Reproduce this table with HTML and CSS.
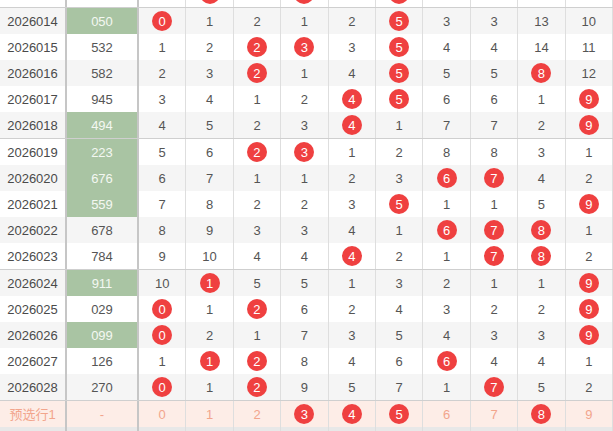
FILE: index.html
```html
<!DOCTYPE html>
<html>
<head>
<meta charset="utf-8">
<link rel="stylesheet" href="styles.css">
</head>
<body>
<div class="sheet">
  <div class="row">
    <div class="c qi"></div><div class="c num"></div>
    <div class="c"></div><div class="c"><span class="ball"></span></div><div class="c"></div><div class="c"><span class="ball"></span></div><div class="c"></div><div class="c"><span class="ball"></span></div><div class="c"></div><div class="c"></div><div class="c"></div><div class="c"></div>
  </div>
  <div class="row alt grp">
    <div class="c qi">2026014</div><div class="c num hit">050</div>
    <div class="c"><span class="ball">0</span></div><div class="c">1</div><div class="c">2</div><div class="c">1</div><div class="c">2</div><div class="c"><span class="ball">5</span></div><div class="c">3</div><div class="c">3</div><div class="c">13</div><div class="c">10</div>
  </div>
  <div class="row">
    <div class="c qi">2026015</div><div class="c num">532</div>
    <div class="c">1</div><div class="c">2</div><div class="c"><span class="ball">2</span></div><div class="c"><span class="ball">3</span></div><div class="c">3</div><div class="c"><span class="ball">5</span></div><div class="c">4</div><div class="c">4</div><div class="c">14</div><div class="c">11</div>
  </div>
  <div class="row alt">
    <div class="c qi">2026016</div><div class="c num">582</div>
    <div class="c">2</div><div class="c">3</div><div class="c"><span class="ball">2</span></div><div class="c">1</div><div class="c">4</div><div class="c"><span class="ball">5</span></div><div class="c">5</div><div class="c">5</div><div class="c"><span class="ball">8</span></div><div class="c">12</div>
  </div>
  <div class="row">
    <div class="c qi">2026017</div><div class="c num">945</div>
    <div class="c">3</div><div class="c">4</div><div class="c">1</div><div class="c">2</div><div class="c"><span class="ball">4</span></div><div class="c"><span class="ball">5</span></div><div class="c">6</div><div class="c">6</div><div class="c">1</div><div class="c"><span class="ball">9</span></div>
  </div>
  <div class="row alt">
    <div class="c qi">2026018</div><div class="c num hit">494</div>
    <div class="c">4</div><div class="c">5</div><div class="c">2</div><div class="c">3</div><div class="c"><span class="ball">4</span></div><div class="c">1</div><div class="c">7</div><div class="c">7</div><div class="c">2</div><div class="c"><span class="ball">9</span></div>
  </div>
  <div class="row grp">
    <div class="c qi">2026019</div><div class="c num hit">223</div>
    <div class="c">5</div><div class="c">6</div><div class="c"><span class="ball">2</span></div><div class="c"><span class="ball">3</span></div><div class="c">1</div><div class="c">2</div><div class="c">8</div><div class="c">8</div><div class="c">3</div><div class="c">1</div>
  </div>
  <div class="row alt">
    <div class="c qi">2026020</div><div class="c num hit">676</div>
    <div class="c">6</div><div class="c">7</div><div class="c">1</div><div class="c">1</div><div class="c">2</div><div class="c">3</div><div class="c"><span class="ball">6</span></div><div class="c"><span class="ball">7</span></div><div class="c">4</div><div class="c">2</div>
  </div>
  <div class="row">
    <div class="c qi">2026021</div><div class="c num hit">559</div>
    <div class="c">7</div><div class="c">8</div><div class="c">2</div><div class="c">2</div><div class="c">3</div><div class="c"><span class="ball">5</span></div><div class="c">1</div><div class="c">1</div><div class="c">5</div><div class="c"><span class="ball">9</span></div>
  </div>
  <div class="row alt">
    <div class="c qi">2026022</div><div class="c num">678</div>
    <div class="c">8</div><div class="c">9</div><div class="c">3</div><div class="c">3</div><div class="c">4</div><div class="c">1</div><div class="c"><span class="ball">6</span></div><div class="c"><span class="ball">7</span></div><div class="c"><span class="ball">8</span></div><div class="c">1</div>
  </div>
  <div class="row">
    <div class="c qi">2026023</div><div class="c num">784</div>
    <div class="c">9</div><div class="c">10</div><div class="c">4</div><div class="c">4</div><div class="c"><span class="ball">4</span></div><div class="c">2</div><div class="c">1</div><div class="c"><span class="ball">7</span></div><div class="c"><span class="ball">8</span></div><div class="c">2</div>
  </div>
  <div class="row alt grp">
    <div class="c qi">2026024</div><div class="c num hit">911</div>
    <div class="c">10</div><div class="c"><span class="ball">1</span></div><div class="c">5</div><div class="c">5</div><div class="c">1</div><div class="c">3</div><div class="c">2</div><div class="c">1</div><div class="c">1</div><div class="c"><span class="ball">9</span></div>
  </div>
  <div class="row">
    <div class="c qi">2026025</div><div class="c num">029</div>
    <div class="c"><span class="ball">0</span></div><div class="c">1</div><div class="c"><span class="ball">2</span></div><div class="c">6</div><div class="c">2</div><div class="c">4</div><div class="c">3</div><div class="c">2</div><div class="c">2</div><div class="c"><span class="ball">9</span></div>
  </div>
  <div class="row alt">
    <div class="c qi">2026026</div><div class="c num hit">099</div>
    <div class="c"><span class="ball">0</span></div><div class="c">2</div><div class="c">1</div><div class="c">7</div><div class="c">3</div><div class="c">5</div><div class="c">4</div><div class="c">3</div><div class="c">3</div><div class="c"><span class="ball">9</span></div>
  </div>
  <div class="row">
    <div class="c qi">2026027</div><div class="c num">126</div>
    <div class="c">1</div><div class="c"><span class="ball">1</span></div><div class="c"><span class="ball">2</span></div><div class="c">8</div><div class="c">4</div><div class="c">6</div><div class="c"><span class="ball">6</span></div><div class="c">4</div><div class="c">4</div><div class="c">1</div>
  </div>
  <div class="row alt">
    <div class="c qi">2026028</div><div class="c num">270</div>
    <div class="c"><span class="ball">0</span></div><div class="c">1</div><div class="c"><span class="ball">2</span></div><div class="c">9</div><div class="c">5</div><div class="c">7</div><div class="c">1</div><div class="c"><span class="ball">7</span></div><div class="c">5</div><div class="c">2</div>
  </div>
  <div class="row pre grp">
    <div class="c qi">预选行1</div><div class="c num">-</div>
    <div class="c">0</div><div class="c">1</div><div class="c">2</div><div class="c"><span class="ball">3</span></div><div class="c"><span class="ball">4</span></div><div class="c"><span class="ball">5</span></div><div class="c">6</div><div class="c">7</div><div class="c"><span class="ball">8</span></div><div class="c">9</div>
  </div>
  <div class="row foot">
    <div class="c qi"></div><div class="c num"></div>
    <div class="c"></div><div class="c"></div><div class="c"></div><div class="c"></div><div class="c"></div><div class="c"></div><div class="c"></div><div class="c"></div><div class="c"></div><div class="c"></div>
  </div>
</div>
</body>
</html>
```
FILE: styles.css
```css
html, body {
  margin: 0;
  padding: 0;
  background: #ffffff;
  overflow: hidden;
}
body {
  font-family: "Liberation Sans", Arial, "Noto Sans CJK SC", sans-serif;
  font-size: 13px;
  color: #555555;
}
.sheet {
  width: 613px;
  margin-top: -19px;
}
.row {
  display: grid;
  grid-template-columns: 67px 72px repeat(10, 1fr);
  height: 26px;
  background: #ffffff;
}
.row.alt {
  background: #f5f5f5;
}
.row.grp {
  border-top: 1px solid #cfcfcf;
}
.c {
  display: flex;
  align-items: center;
  justify-content: center;
  border-right: 1px solid #dedede;
  line-height: 1;
  white-space: nowrap;
}
.c.qi {
  border-right: 2px solid #c6c6c6;
  color: #4a4a4a;
}
.c.num {
  border-right: 2px solid #c6c6c6;
}
.c.hit {
  background: #a9c4a3;
  color: #f4f8f2;
}
.ball {
  display: flex;
  align-items: center;
  justify-content: center;
  width: 20px;
  height: 20px;
  border-radius: 50%;
  background: #ef4040;
  color: #ffffff;
}
.row.pre {
  background: #fdede7;
  color: #f2a58c;
}
.row.pre .c.qi {
  color: #f2a58c;
}
.row.foot {
  background: #e8e8e8;
  height: 10px;
}
```
